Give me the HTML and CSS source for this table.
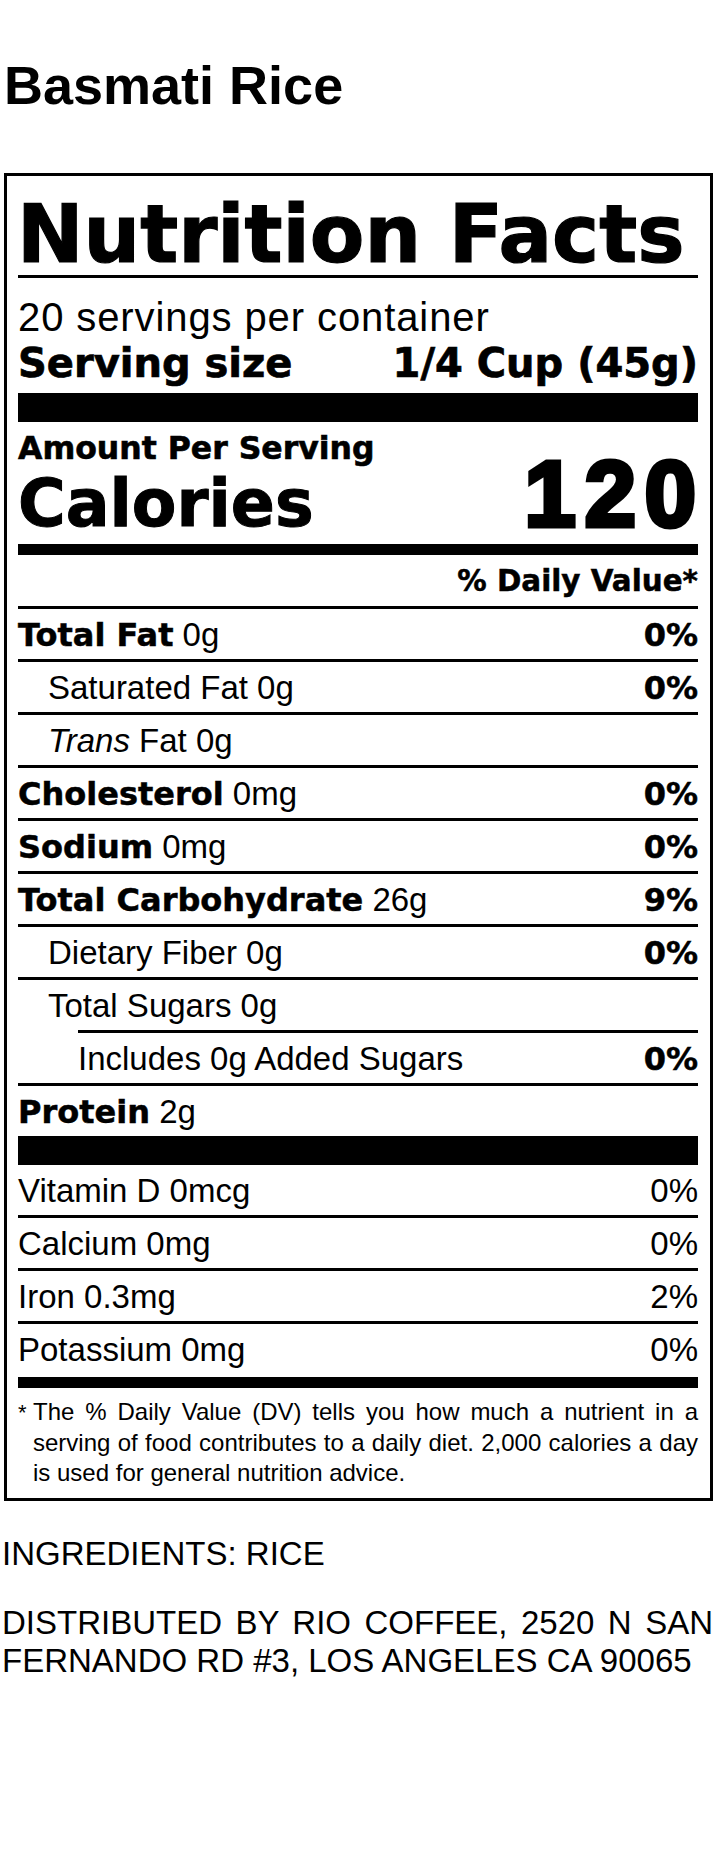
FILE: index.html
```html
<!DOCTYPE html>
<html lang="en">
<head>
<meta charset="utf-8">
<title>Basmati Rice</title>
<link rel="stylesheet" href="styles.css">
</head>
<body>
<div class="page">
  <h1 class="title">Basmati Rice</h1>
  <section class="label">
    <h2 class="nf">Nutrition Facts</h2>
    <div class="servings">20 servings per container</div>
    <div class="serving-size"><span>Serving size</span><span>1/4 Cup (45g)</span></div>
    <div class="bar bar-thick"></div>
    <div class="calories">
      <div class="cal-left">
        <div class="amount">Amount Per Serving</div>
        <div class="cal-label">Calories</div>
      </div>
      <div class="cal-value">120</div>
    </div>
    <div class="bar bar-med"></div>
    <div class="dv-head">% Daily Value*</div>

    <div class="row"><span class="name"><b>Total Fat</b> 0g</span><b class="pct">0%</b></div>
    <div class="row ind1"><span class="name">Saturated Fat 0g</span><b class="pct">0%</b></div>
    <div class="row ind1"><span class="name"><i>Trans</i> Fat 0g</span></div>
    <div class="row"><span class="name"><b>Cholesterol</b> 0mg</span><b class="pct">0%</b></div>
    <div class="row"><span class="name"><b>Sodium</b> 0mg</span><b class="pct">0%</b></div>
    <div class="row"><span class="name"><b>Total Carbohydrate</b> 26g</span><b class="pct">9%</b></div>
    <div class="row ind1"><span class="name">Dietary Fiber 0g</span><b class="pct">0%</b></div>
    <div class="row ind1"><span class="name">Total Sugars 0g</span></div>
    <div class="row ind2"><span class="name">Includes 0g Added Sugars</span><b class="pct">0%</b></div>
    <div class="row"><span class="name"><b>Protein</b> 2g</span></div>
    <div class="bar bar-thick bar-protein"></div>

    <div class="row vit first"><span class="name">Vitamin D 0mcg</span><span class="pct">0%</span></div>
    <div class="row vit"><span class="name">Calcium 0mg</span><span class="pct">0%</span></div>
    <div class="row vit"><span class="name">Iron 0.3mg</span><span class="pct">2%</span></div>
    <div class="row vit"><span class="name">Potassium 0mg</span><span class="pct">0%</span></div>
    <div class="bar bar-med bar-end"></div>

    <div class="footnote">
      <span class="fl just"><span class="ast">*</span>The % Daily Value (DV) tells you how much a nutrient in a</span>
      <span class="fl just ind">serving of food contributes to a daily diet. 2,000 calories a day</span>
      <span class="fl ind">is used for general nutrition advice.</span>
    </div>
  </section>
  <p class="ingredients">INGREDIENTS: RICE</p>
  <p class="distrib"><span class="dl just">DISTRIBUTED BY RIO COFFEE, 2520 N SAN</span><span class="dl">FERNANDO RD #3, LOS ANGELES CA 90065</span></p>
</div>
</body>
</html>
```

FILE: styles.css
```css
* { box-sizing: border-box; }

body {
  margin: 0;
  background: #fff;
  color: #000;
  font-family: "Liberation Sans", Arial, sans-serif;
}

.page {
  padding: 54px 9px 0 2px;
}

.title {
  margin: 0;
  padding-left: 2px;
  font: bold 54px/62px "Liberation Sans", Arial, sans-serif;
}

.label {
  margin: 57px 0 0 2px;
  border: 3px solid #000;
  padding: 0 12px 10px 11px;
}

.nf {
  margin: 0;
  padding-top: 19px;
  font: bold 79.5px/80px "DejaVu Sans", sans-serif;
  -webkit-text-stroke: 1.2px #000;
  text-indent: -1px;
  border-bottom: 3px solid #000;
  white-space: nowrap;
}

.servings {
  margin-top: 17px;
  font-size: 40px;
  line-height: 44px;
  letter-spacing: 0.9px;
}

.serving-size {
  display: flex;
  justify-content: space-between;
  margin-top: 2px;
  font: bold 40px/44px "DejaVu Sans", sans-serif;
  -webkit-text-stroke: 0.7px #000;
}

.bar { background: #000; }
.bar-thick { height: 29px; margin-top: 8px; }
.bar-protein { margin-top: 0; }
.bar-med { height: 11px; margin-top: 7px; }
.bar-end { margin-top: 3px; }

.calories {
  display: flex;
  justify-content: space-between;
  align-items: last baseline;
  padding-top: 9px;
}

.amount {
  font: bold 31.5px/34px "DejaVu Sans", sans-serif;
  -webkit-text-stroke: 0.6px #000;
}

.cal-label {
  margin-top: 6px;
  font: bold 65px/66px "DejaVu Sans", sans-serif;
  -webkit-text-stroke: 1px #000;
}

.cal-value {
  font: bold 92px/80px "Liberation Sans", Arial, sans-serif;
  -webkit-text-stroke: 5px #000;
  letter-spacing: 9px;
  margin-right: -7px;
}

.dv-head {
  padding-top: 2px;
  text-align: right;
  font: bold 29.4px/49px "DejaVu Sans", sans-serif;
  -webkit-text-stroke: 0.5px #000;
}

.row {
  display: flex;
  justify-content: space-between;
  align-items: baseline;
  height: 53px;
  padding-top: 2px;
  border-top: 3px solid #000;
  font-size: 33px;
  line-height: 48px;
  white-space: nowrap;
}

.row b {
  font-family: "DejaVu Sans", sans-serif;
  font-weight: bold;
  font-size: 32px;
  -webkit-text-stroke: 0.5px #000;
}

.row.ind1 .name { padding-left: 30px; }
.row.ind2 { margin-left: 60px; }

.row.vit.first {
  border-top: 0;
  height: 50px;
}

.footnote {
  padding-top: 9px;
  font-size: 24px;
  line-height: 30px;
}

.fl { display: block; }
.fl.ind { padding-left: 15px; }
.just { text-align: justify; text-align-last: justify; }

.ast {
  display: inline-block;
  width: 15px;
  font-size: 22px;
}

.ingredients {
  margin: 34px 0 0;
  font-size: 33px;
  line-height: 38px;
}

.distrib {
  margin: 31px 0 0;
  font-size: 33px;
  line-height: 38px;
}

.dl { display: block; }
```
